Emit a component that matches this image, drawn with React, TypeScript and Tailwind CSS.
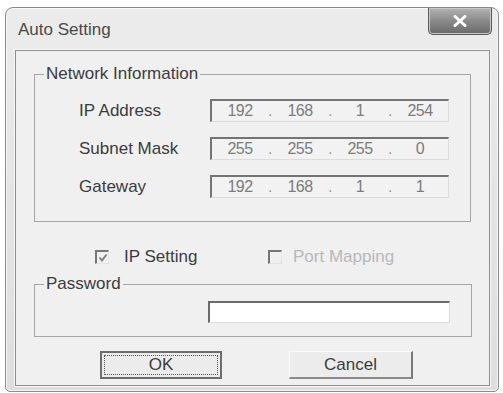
import React from 'react';

const font = { fontFamily: '"Liberation Sans", Arial, sans-serif' };

function IpField({ parts }: { parts: string[] }) {
    return (
        <div className="flex items-center w-[239px] h-[23px] pl-[2px] bg-[#f2f2f2] border-t-2 border-l-2 border-t-[#747474] border-l-[#747474] border-r border-b border-r-[#dcdcdc] border-b-[#dcdcdc] text-[#7c7c7c] text-[16px] tracking-[-0.5px]">
            {parts.map((p, i) => (
                <React.Fragment key={i}>
                    <span className="w-[52px] text-center leading-[20px]">{p}</span>
                    {i < 3 && <span className="w-[8px] text-center leading-[20px] text-[#9a9a9a]">.</span>}
                </React.Fragment>
            ))}
        </div>
    );
}

function Row({ label, parts }: { label: string; parts: string[] }) {
    return (
        <div className="flex items-center h-[23px]">
            <span className="w-[131px] text-[17px] text-[#3c3c3c]">{label}</span>
            <IpField parts={parts} />
        </div>
    );
}

function CheckBox({ checked }: { checked: boolean }) {
    return (
        <div className="w-[14px] h-[14px] bg-[#f0f0f0] border-t-2 border-l-2 border-t-[#777777] border-l-[#777777] border-r border-b border-r-[#e4e4e4] border-b-[#e4e4e4] flex items-center justify-center">
            {checked && (
                <svg width="10" height="10" viewBox="0 0 10 10">
                    <path d="M1.5 4.5 L4 7.5 L8.5 1.5" fill="none" stroke="#7a7a7a" strokeWidth="1.8" />
                </svg>
            )}
        </div>
    );
}

export default function App() {
    return (
        <div className="w-[503px] h-[393px] bg-white" style={font}>
            <div className="ml-[5px] pt-[7px]">
                <div className="w-[494px] h-[385px] rounded-t-[8px] rounded-b-[5px] border border-[#8a8a8a] bg-gradient-to-b from-[#ececec] via-[#e4e4e4] to-[#dedede] shadow-[inset_0_0_0_1px_#f8f8f8]">

                    {/* title bar */}
                    <div className="flex justify-between h-[42px]">
                        <span className="pl-[12px] pt-[12px] text-[17px] text-[#4a4a4a] leading-[20px]">Auto Setting</span>
                        <div className="mr-[6px] w-[64px] h-[27px] rounded-b-[5px] border border-t-0 border-[#5a5a5a] bg-gradient-to-b from-[#b4b4b4] via-[#8a8a8a] to-[#6a6a6a] shadow-[inset_0_0_0_1px_#c8c8c8] flex items-center justify-center">
                            <svg width="14" height="12" viewBox="0 0 14 12">
                                <path d="M2 1.5 L12 10.5 M12 1.5 L2 10.5" stroke="#ffffff" strokeWidth="3" strokeLinecap="round" />
                            </svg>
                        </div>
                    </div>

                    {/* client area */}
                    <div className="ml-[9px] mr-[8px] h-[336px] bg-[#f0f0f0] border border-[#8e8e8e] shadow-[0_0_0_1px_#f6f6f6]">

                        <fieldset className="ml-[18px] mt-[14px] w-[437px] border border-[#a6a6a6] pb-[23px]">
                            <legend className="ml-[9px] px-[2px] text-[17px] leading-[18px] text-[#3c3c3c]">Network Information</legend>
                            <div className="flex flex-col gap-[15px] pt-[16px] pl-[44px]">
                                <Row label="IP Address" parts={['192', '168', '1', '254']} />
                                <Row label="Subnet Mask" parts={['255', '255', '255', '0']} />
                                <Row label="Gateway" parts={['192', '168', '1', '1']} />
                            </div>
                        </fieldset>

                        <div className="flex items-center h-[20px] mt-[25px] pl-[79px] text-[17px]">
                            <div className="flex items-center gap-[15px] w-[173px]">
                                <CheckBox checked />
                                <span className="text-[#3c3c3c]">IP Setting</span>
                            </div>
                            <div className="flex items-center gap-[11px]">
                                <CheckBox checked={false} />
                                <span className="text-[#b8b8b8]">Port Mapping</span>
                            </div>
                        </div>

                        <fieldset className="ml-[18px] mt-[8px] w-[438px] border border-[#a6a6a6] pb-[13px]">
                            <legend className="ml-[9px] px-[2px] text-[17px] leading-[18px] text-[#3c3c3c]">Password</legend>
                            <div className="pt-[8px] pl-[173px]">
                                <div className="w-[242px] h-[22px] bg-white border-t-2 border-l-2 border-t-[#6a6a6a] border-l-[#6a6a6a] border-r border-b border-r-[#dedede] border-b-[#dedede]" />
                            </div>
                        </fieldset>

                        <div className="flex mt-[14px] pl-[84px] gap-[67px] text-[17px] text-[#3c3c3c]">
                            <div className="w-[122px] h-[28px] border-2 border-[#6e6e6e] bg-[#ececec] p-[2px]">
                                <div className="h-full border border-dotted border-[#555] flex items-center justify-center leading-[18px]">OK</div>
                            </div>
                            <div className="w-[124px] h-[28px] border border-t-[#fafafa] border-l-[#fafafa] border-r-2 border-b-2 border-r-[#7a7a7a] border-b-[#8a8a8a] bg-[#ececec] flex items-center justify-center">Cancel</div>
                        </div>
                    </div>
                </div>
            </div>
        </div>
    );
}
